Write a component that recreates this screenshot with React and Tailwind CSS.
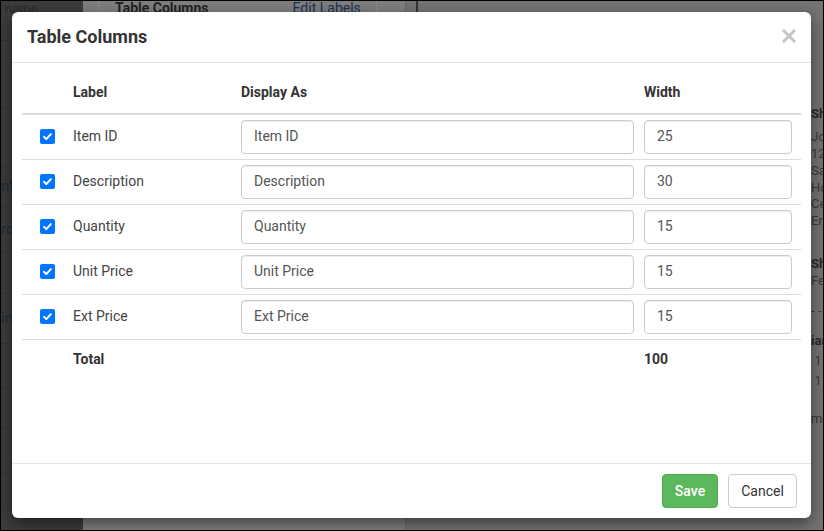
import React from 'react';

const rows = [
  { label: 'Item ID', width: '25' },
  { label: 'Description', width: '30' },
  { label: 'Quantity', width: '15' },
  { label: 'Unit Price', width: '15' },
  { label: 'Ext Price', width: '15' },
];

const rightSnips = [
  { t: 'Sh', y: 'top-[105px]', bold: true },
  { t: 'Jo', y: 'top-[128px]' },
  { t: '12', y: 'top-[145px]' },
  { t: 'Sa', y: 'top-[162px]' },
  { t: 'Ho', y: 'top-[179px]' },
  { t: 'Ce', y: 'top-[195px]' },
  { t: 'Er', y: 'top-[212px]' },
  { t: 'Sh', y: 'top-[255px]', bold: true },
  { t: 'Fe', y: 'top-[272px]' },
  { t: '- -', y: 'top-[302px]' },
  { t: 'iar', y: 'top-[332px]', bold: true },
  { t: ' 1', y: 'top-[352px]' },
  { t: ' 1', y: 'top-[372px]' },
  { t: 'mi', y: 'top-[410px]' },
];

function Check() {
  return (
    <span className="flex h-[15px] w-[15px] items-center justify-center rounded-[2px] bg-[#0075ff]">
      <svg viewBox="0 0 12 12" className="h-[11px] w-[11px]" fill="none" stroke="white" strokeWidth="2.2" strokeLinecap="round" strokeLinejoin="round">
        <path d="M2.2 6.4l2.5 2.4 5-5.4" />
      </svg>
    </span>
  );
}

export default function App() {
  return (
    <div className="relative h-[531px] w-[824px] overflow-hidden border border-black font-['Roboto',sans-serif] text-[14px]">
      {/* dimmed page behind the modal */}
      <div className="flex h-full">
        <div className="flex w-[82px] flex-col bg-[#3c3c3c] text-[13px] text-[#1f2a3a]">
          <div className="h-[40px] border-b border-[#333] pl-[4px] leading-[16px] text-[#2a2a2a]">name</div>
          <div className="h-[68px] border-b border-[#333]" />
          <div className="h-[58px] border-b border-[#333]" />
          <div className="flex h-[40px] items-center border-b border-[#333] text-[15px]">nt</div>
          <div className="flex h-[45px] items-center border-b border-[#333] text-[15px]">rc</div>
          <div className="h-[42px] border-b border-[#333]" />
          <div className="flex h-[50px] items-center border-b border-[#333] text-[15px]">in</div>
          <div className="h-[45px] border-b border-[#333]" />
          <div className="h-[40px] border-b border-[#333]" />
          <div className="h-[45px] border-b border-[#333]" />
        </div>
        <div className="relative w-[323px] border-r border-[#6a6a6a] bg-[#7f7f7f]">
          <div className="flex h-[14px] items-center">
            <div className="ml-[15px] h-full border-l border-[#8a8a8a]" />
            <span className="ml-[16px] text-[14px] font-bold leading-[14px] text-[#222]">Table Columns</span>
            <span className="ml-[84px] text-[14px] leading-[14px] text-[#1c3150]">Edit Labels</span>
            <div className="ml-[15px] h-full border-l border-[#8a8a8a]" />
          </div>
        </div>
        <div className="relative flex-1 overflow-hidden bg-[#747474]">
          <div className="ml-[10px] h-[14px] w-[2px] bg-[#333]" />
          {rightSnips.map((s, i) => (
            <div
              key={i}
              className={`absolute left-[405px] ${s.y} whitespace-pre text-[13px] leading-[16px] ${s.bold ? 'font-bold text-[#2a2a2a]' : 'text-[#3a3a3a]'}`}
            >
              {s.t}
            </div>
          ))}
        </div>
      </div>

      {/* modal */}
      <div className="absolute left-[11px] top-[11px] flex h-[506px] w-[799px] flex-col rounded-[6px] bg-white shadow-[0_5px_15px_rgba(0,0,0,0.5)]">
        <div className="flex h-[51px] shrink-0 items-center justify-between border-b border-[#e5e5e5] pl-[15px] pr-[15px]">
          <h4 className="text-[18px] font-bold leading-[20px] text-[#333]">Table Columns</h4>
          <svg viewBox="0 0 14 14" className="mt-[-3px] h-[14px] w-[14px]" stroke="#c4c4c4" strokeWidth="3" strokeLinecap="square">
            <path d="M2 2l10 10M12 2L2 12" />
          </svg>
        </div>

        <div className="flex-1 px-[10px]">
          <div className="grid h-[52px] grid-cols-[43px_168px_408px_161px] items-end border-b-2 border-[#ddd] pb-[11px] font-bold leading-[20px] text-[#333]">
            <div />
            <div className="pl-[8px]">Label</div>
            <div className="pl-[8px]">Display As</div>
            <div className="pl-[3px]">Width</div>
          </div>
          {rows.map((r) => (
            <div key={r.label} className="grid h-[45px] grid-cols-[43px_168px_408px_161px] items-center border-b border-[#ddd] text-[#444]">
              <div className="mt-[-2px] pl-[18px]">
                <Check />
              </div>
              <div className="mt-[-2px] pl-[8px]">{r.label}</div>
              <div className="pl-[8px]">
                <div className="flex h-[34px] w-[393px] items-center rounded-[4px] border border-[#ccc] px-[12px] pb-[1px] text-[#555] shadow-[inset_0_1px_1px_rgba(0,0,0,0.075)]">
                  {r.label}
                </div>
              </div>
              <div className="pl-[3px]">
                <div className="flex h-[34px] w-[148px] items-center rounded-[4px] border border-[#ccc] px-[12px] pb-[1px] text-[#555] shadow-[inset_0_1px_1px_rgba(0,0,0,0.075)]">
                  {r.width}
                </div>
              </div>
            </div>
          ))}
          <div className="grid h-[38px] grid-cols-[43px_168px_408px_161px] items-center font-bold text-[#333]">
            <div />
            <div className="pl-[8px]">Total</div>
            <div />
            <div className="pl-[3px]">100</div>
          </div>
        </div>

        <div className="flex h-[55px] shrink-0 items-center justify-end gap-[10px] border-t border-[#e5e5e5] pr-[14px]">
          <button className="h-[34px] w-[56px] rounded-[4px] border border-[#4cae4c] bg-[#5cb85c] text-[14px] font-medium text-white">
            Save
          </button>
          <button className="h-[34px] w-[69px] rounded-[4px] border border-[#ccc] bg-white text-[14px] text-[#333]">
            Cancel
          </button>
        </div>
      </div>
    </div>
  );
}
